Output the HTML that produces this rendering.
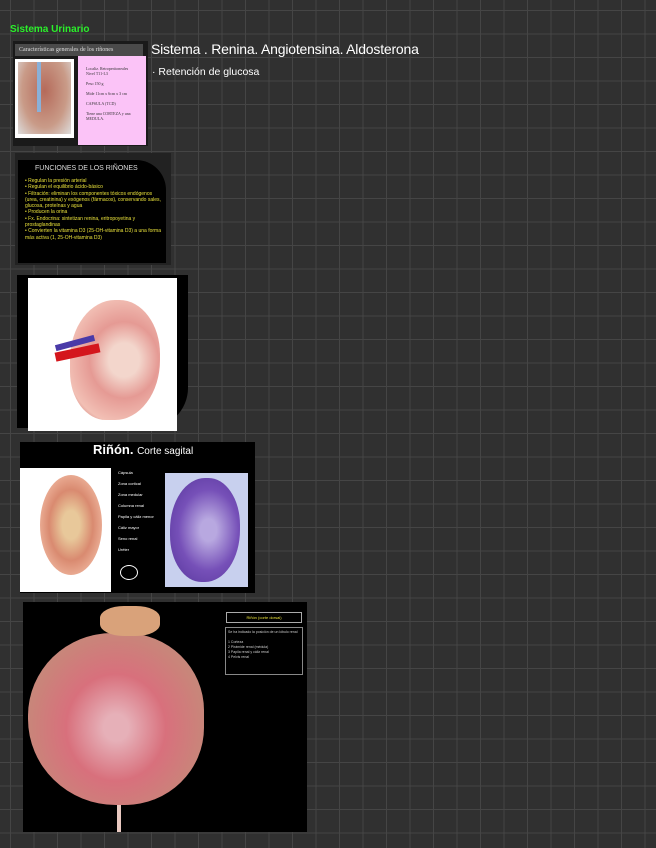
<!DOCTYPE html>
<html><head><meta charset="utf-8"><style>
body{margin:0;width:656px;height:848px;overflow:hidden;background-color:#303030;
background-image:linear-gradient(#454545 1px,transparent 1px),linear-gradient(90deg,#454545 1px,transparent 1px);
background-size:23.5px 23.5px;background-position:10px 10px;font-family:"Liberation Sans",sans-serif;position:relative}
.a{position:absolute}
.hw{color:#fff;font-family:"Liberation Sans",sans-serif}
.y{color:#e8e03a;font-size:5px;line-height:6.3px}
</style></head><body>
<div class="a" style="left:10px;top:24px;color:#2bef2b;font-size:10px;font-weight:bold">Sistema Urinario</div>
<div class="a hw" style="left:151px;top:41px;font-size:14px;letter-spacing:-0.2px">Sistema . Renina. Angiotensina. Aldosterona</div>
<div class="a hw" style="left:152px;top:66px;font-size:10.5px">· Retención de glucosa</div>

<div class="a" style="left:13px;top:41px;width:135px;height:105px;background:#1a1a1a"></div>
<div class="a" style="left:15px;top:44px;width:124px;height:12px;background:#4a4a4a;color:#ddd;font-family:'Liberation Serif',serif;font-size:6px;line-height:12px;padding-left:4px">Características generales de los riñones</div>
<div class="a" style="left:15px;top:59px;width:59px;height:79px;background:#fff"></div>
<div class="a" style="left:18px;top:62px;width:53px;height:72px;background:radial-gradient(ellipse at 50% 40%,#b56a5a,#c99b88 60%,#ddd 100%)"></div>
<div class="a" style="left:37px;top:62px;width:4px;height:50px;background:#8ab0d8"></div>
<div class="a" style="left:78px;top:56px;width:68px;height:89px;background:#fbc3f7;font-family:'Liberation Serif',serif;font-size:4px;line-height:5px;color:#333;padding:10px 0 0 8px;box-sizing:border-box">Localiz. Retroperitoneales<br>Nivel T11-L3<br><br>Peso 150 g<br><br>Mide 11cm x 6cm x 3 cm<br><br>CAPSULA (TCD)<br><br>Tiene una CORTEZA y una MEDULA.</div>

<div class="a" style="left:15px;top:153px;width:156px;height:112px;background:#222"></div>
<div class="a" style="left:18px;top:160px;width:148px;height:103px;background:#000;border-radius:0 30px 0 0"></div>
<div class="a" style="left:35px;top:165px;color:#ddd;font-size:7px">FUNCIONES DE LOS RIÑONES</div>
<div class="a y" style="left:25px;top:178px;width:140px">• Regulan la presión arterial<br>• Regulan el equilibrio ácido-básico<br>• Filtración: eliminan los componentes tóxicos endógenos (urea, creatinina) y exógenos (fármacos), conservando sales, glucosa, proteínas y agua<br>• Producen la orina<br>• Fx. Endocrina: sintetizan renina, eritropoyetina y prostaglandinas<br>• Convierten la vitamina D3 (25-OH-vitamina D3) a una forma más activa (1, 25-OH-vitamina D3)</div>

<div class="a" style="left:17px;top:275px;width:171px;height:153px;background:#000;border-radius:0 0 40px 0"></div>
<div class="a" style="left:28px;top:278px;width:149px;height:153px;background:#fff"></div>
<div class="a" style="left:70px;top:300px;width:90px;height:120px;border-radius:50% 45% 50% 40%;background:radial-gradient(ellipse at 60% 50%,#f3d6cc 20%,#e59a94 45%,#f2c0b5 75%,#b24a4a 98%)"></div>
<div class="a" style="left:55px;top:348px;width:45px;height:9px;background:#d4161c;transform:rotate(-12deg)"></div>
<div class="a" style="left:55px;top:340px;width:40px;height:6px;background:#4a3aa8;transform:rotate(-15deg)"></div>

<div class="a" style="left:20px;top:442px;width:235px;height:151px;background:#000"></div>
<div class="a" style="left:93px;top:442px;color:#fff;font-size:13px"><b>Riñón.</b> <span style="font-size:10px">Corte sagital</span></div>
<div class="a" style="left:20px;top:468px;width:91px;height:124px;background:#fff"></div>
<div class="a" style="left:40px;top:475px;width:62px;height:100px;border-radius:50%;background:radial-gradient(ellipse,#e8c89a 20%,#d98a70 50%,#f0b8a0 80%)"></div>
<div class="a" style="left:165px;top:473px;width:83px;height:114px;background:#c8d0ee"></div>
<div class="a" style="left:170px;top:478px;width:70px;height:104px;border-radius:50% 45% 50% 45%;background:radial-gradient(ellipse at 55% 50%,#b8a8e0 15%,#7650b8 55%,#5c3aa0 90%)"></div>
<div class="a" style="left:118px;top:467px;color:#fff;font-size:4px;line-height:11px">Cápsula<br>Zona cortical<br>Zona medular<br>Columna renal<br>Papila y cáliz menor<br>Cáliz mayor<br>Seno renal<br>Uréter</div>
<div class="a" style="left:120px;top:565px;width:16px;height:13px;border:1px solid #fff;border-radius:50%"></div>

<div class="a" style="left:23px;top:602px;width:284px;height:230px;background:#000"></div>
<div class="a" style="left:28px;top:633px;width:176px;height:172px;border-radius:48% 45% 45% 50%;background:radial-gradient(ellipse at 50% 55%,#e6b0b8 10%,#d8707c 40%,#c9857a 70%,#b99080 95%)"></div>
<div class="a" style="left:100px;top:606px;width:60px;height:30px;border-radius:40%;background:#d9a27a"></div>
<div class="a" style="left:117px;top:805px;width:4px;height:27px;background:#e8c8c0"></div>
<div class="a" style="left:226px;top:612px;width:74px;height:9px;border:1px solid #aaa;color:#e8e03a;font-size:4px;line-height:9px;text-align:center">Riñón (corte dorsal)</div>
<div class="a" style="left:225px;top:627px;width:78px;height:48px;border:1px solid #888;color:#ccc;font-size:3.5px;line-height:5px;padding:2px;box-sizing:border-box">Se ha indicado la posición de un lóbulo renal<br><br>1 Corteza<br>2 Pirámide renal (médula)<br>3 Papila renal y cáliz renal<br>4 Pelvis renal</div>
</body></html>
